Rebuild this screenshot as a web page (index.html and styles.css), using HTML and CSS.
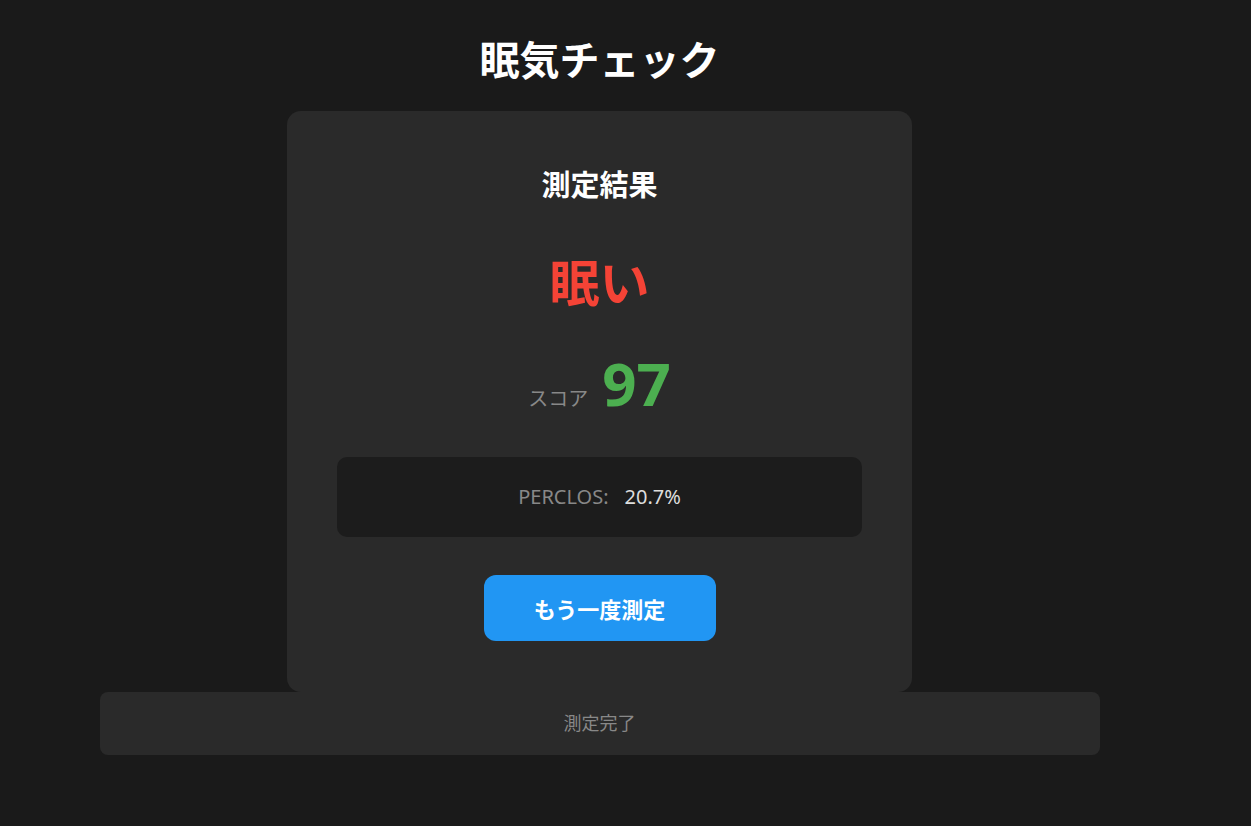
FILE: index.html
```html
<!DOCTYPE html>
<html lang="ja">
<head>
  <meta charset="UTF-8" />
  <meta name="viewport" content="width=device-width, initial-scale=1.0"/>
  <title>眠気チェック</title>
  <link rel="stylesheet" href="styles.css">
</head>
<body>
  <div class="app">
    <h1>眠気チェック</h1>

    <div class="result-card">
      <h2>測定結果</h2>
      <div class="level">眠い</div>
      <div class="score">
        <span class="score-label">スコア</span>
        <span class="score-value">97</span>
      </div>
      <div class="detail">
        <span class="detail-label">PERCLOS:</span>
        <span class="detail-value">20.7%</span>
      </div>
      <button class="retry">もう一度測定</button>
    </div>

    <div class="status">測定完了</div>
  </div>
</body>
</html>
```

FILE: styles.css
```css
* {
  box-sizing: border-box;
  margin: 0;
  padding: 0;
  font-family: 'Noto Sans', 'Noto Sans CJK JP', sans-serif;
}

body {
  background: #1a1a1a;
  color: white;
  min-height: 100vh;
}

.app {
  width: 1199px;
  padding: 36px 0 30px;
  display: flex;
  flex-direction: column;
  align-items: center;
}

h1 {
  font-size: 40px;
  font-weight: 700;
  line-height: 48px;
  margin-bottom: 27px;
}

.result-card {
  width: 625px;
  background: #2a2a2a;
  border-radius: 14px;
  padding: 54px 50px 51px;
  display: flex;
  flex-direction: column;
  align-items: center;
}

.result-card h2 {
  font-size: 29px;
  font-weight: 700;
  line-height: 40px;
}

.level {
  color: #f44336;
  font-size: 50px;
  font-weight: 700;
  line-height: 70px;
  margin-top: 43px;
}

.score {
  display: flex;
  align-items: baseline;
  gap: 14px;
  margin-top: 26px;
}

.score-label {
  color: #888;
  font-size: 20px;
}

.score-value {
  color: #4caf50;
  font-size: 60px;
  font-weight: 700;
  line-height: 78px;
}

.detail {
  width: 100%;
  background: #1c1c1c;
  border-radius: 10px;
  padding: 26px;
  margin-top: 35px;
  display: flex;
  justify-content: center;
  gap: 16px;
  font-size: 20px;
  line-height: 28px;
}

.detail-label {
  color: #888;
}

.detail-value {
  color: #ddd;
}

.retry {
  margin-top: 38px;
  width: 232px;
  height: 66px;
  background: #2196f3;
  color: white;
  border: none;
  border-radius: 12px;
  font-size: 22px;
  font-weight: 700;
  cursor: pointer;
}

.status {
  width: 1000px;
  background: #2a2a2a;
  border-radius: 8px;
  padding: 18px;
  text-align: center;
  color: #888;
  font-size: 18px;
  line-height: 27px;
}
```
